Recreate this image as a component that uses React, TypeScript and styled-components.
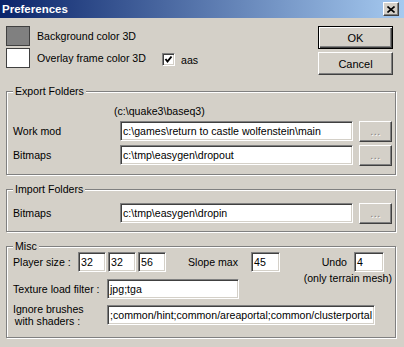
import React from 'react';
import styled, { createGlobalStyle } from 'styled-components';

const GlobalStyle = createGlobalStyle`
  html, body {
    margin: 0;
    padding: 0;
    background: #d4d0c8;
  }
  body {
    font-family: "Liberation Sans", Arial, sans-serif;
    font-size: 10.6px;
    color: #000;
  }
`;

const Window = styled.div`
  width: 404px;
  height: 347px;
  background: #d4d0c8;
  overflow: hidden;
  display: flex;
  flex-direction: column;
`;

const TitleBar = styled.div`
  flex: none;
  height: 18px;
  display: flex;
  align-items: center;
  justify-content: space-between;
  padding: 0 5px 0 2px;
  background: linear-gradient(to right, #0a246a, #a6caf0);
`;

const Title = styled.span`
  color: #fff;
  font-weight: bold;
  font-size: 11.5px;
  line-height: 18px;
`;

const raised = `
  border: 1px solid;
  border-color: #fff #404040 #404040 #fff;
  box-shadow: inset -1px -1px 0 #808080, inset 1px 1px 0 #d4d0c8;
  background: #d4d0c8;
`;

const sunken = `
  border: 1px solid;
  border-color: #808080 #fff #fff #808080;
  box-shadow: inset 1px 1px 0 #404040, inset -1px -1px 0 #d4d0c8;
`;

const CloseButton = styled.div`
  ${raised}
  box-sizing: border-box;
  width: 16px;
  height: 14px;
  display: flex;
  align-items: center;
  justify-content: center;
`;

const Body = styled.div`
  padding: 8px 0 0 6px;
  display: flex;
  flex-direction: column;
`;

const TopSection = styled.div`
  display: flex;
  justify-content: space-between;
  align-items: flex-start;
  padding-right: 11px;
  margin-bottom: 10px;
`;

const SwatchList = styled.div`
  display: flex;
  flex-direction: column;
  gap: 2px;
`;

const SwatchRow = styled.div`
  display: flex;
  align-items: center;
  height: 20px;
`;

const Swatch = styled.div<{ $color: string }>`
  box-sizing: border-box;
  width: 24px;
  height: 20px;
  border: 1px solid #404040;
  background: ${(p) => p.$color};
`;

const SwatchLabel = styled.span`
  margin-left: 7px;
  width: 125px;
  white-space: nowrap;
`;

const CheckWrap = styled.label`
  display: flex;
  align-items: center;
  gap: 6px;
  margin-top: 3px;
`;

const CheckBox = styled.span`
  ${sunken}
  box-sizing: border-box;
  width: 13px;
  height: 13px;
  background: #fff;
  display: flex;
  align-items: center;
  justify-content: center;
`;

const ButtonColumn = styled.div`
  display: flex;
  flex-direction: column;
  gap: 3px;
`;

const DialogButton = styled.div<{ $default?: boolean }>`
  box-sizing: border-box;
  width: 75px;
  height: 23px;
  display: flex;
  align-items: center;
  justify-content: center;
  font-size: 11px;
  ${(p) =>
    p.$default
      ? `
    border: 1px solid #000;
    background: #d4d0c8;
    box-shadow: inset 1px 1px 0 #fff, inset -1px -1px 0 #404040, inset -2px -2px 0 #808080;
  `
      : raised}
`;

const Group = styled.fieldset<{ $pad: string }>`
  box-sizing: border-box;
  width: 390px;
  margin: 0 0 8px 0;
  padding: ${(p) => p.$pad};
  border: 1px solid #808080;
  box-shadow: inset 1px 1px 0 #fff, 1px 1px 0 #fff;
  min-inline-size: 0;
`;

const Legend = styled.legend`
  padding: 0 2px;
  line-height: 13px;
  background: #d4d0c8;
`;

const Hint = styled.div`
  margin-left: 101px;
  line-height: 13px;
`;

const FolderRow = styled.div`
  display: grid;
  grid-template-columns: 101px 233px 33px;
  column-gap: 6px;
  align-items: center;
  height: 22px;
  margin-top: 2px;
`;

const TextBox = styled.div<{ $w?: number }>`
  ${sunken}
  box-sizing: border-box;
  width: ${(p) => (p.$w ? `${p.$w}px` : 'auto')};
  height: 20px;
  padding: 0 1px 0 2px;
  background: #fff;
  line-height: 18px;
  white-space: nowrap;
  overflow: hidden;
`;

const BrowseButton = styled.div`
  ${raised}
  box-sizing: border-box;
  height: 21px;
  display: flex;
  align-items: center;
  justify-content: center;
  color: #808080;
  text-shadow: 1px 1px 0 #fff;
  letter-spacing: 0.5px;
`;

const MiscTop = styled.div`
  display: flex;
  justify-content: space-between;
  align-items: flex-start;
  margin-top: -1px;
`;

const MiscLeft = styled.div`
  display: flex;
  flex-direction: column;
  gap: 7px;
`;

const MiscRow = styled.div`
  display: flex;
  align-items: center;
  height: 20px;
`;

const FieldLabel = styled.span<{ $w: number; $ml?: number }>`
  width: ${(p) => p.$w}px;
  margin-left: ${(p) => p.$ml ?? 0}px;
  white-space: nowrap;
`;

const SizeInputs = styled.div`
  display: flex;
  gap: 2px;
`;

const MiscRight = styled.div`
  display: flex;
  flex-direction: column;
  align-items: flex-end;
`;

const UndoRow = styled.div`
  display: flex;
  align-items: center;
  gap: 7px;
  height: 20px;
  margin-right: 8px;
`;

const Note = styled.div`
  line-height: 13px;
`;

const IgnoreRow = styled.div`
  display: flex;
  align-items: center;
  height: 24px;
  margin-top: 4px;
`;

const IgnoreLabel = styled.div`
  width: 69px;
  margin-right: 25px;
  text-align: center;
  line-height: 12px;
  white-space: nowrap;
`;

export default function App() {
  return (
    <>
      <GlobalStyle />
      <Window>
        <TitleBar>
          <Title>Preferences</Title>
          <CloseButton>
            <svg width="8" height="7" viewBox="0 0 8 7">
              <path d="M0.5 0.5 L7.5 6.5 M7.5 0.5 L0.5 6.5" stroke="#000" strokeWidth="1.6" />
            </svg>
          </CloseButton>
        </TitleBar>
        <Body>
          <TopSection>
            <SwatchList>
              <SwatchRow>
                <Swatch $color="#808080" />
                <SwatchLabel>Background color 3D</SwatchLabel>
              </SwatchRow>
              <SwatchRow>
                <Swatch $color="#ffffff" />
                <SwatchLabel>Overlay frame color 3D</SwatchLabel>
                <CheckWrap>
                  <CheckBox>
                    <svg width="9" height="9" viewBox="0 0 9 9">
                      <path d="M1.5 4 L3.5 6.5 L7.5 1.5" fill="none" stroke="#000" strokeWidth="2" />
                    </svg>
                  </CheckBox>
                  aas
                </CheckWrap>
              </SwatchRow>
            </SwatchList>
            <ButtonColumn>
              <DialogButton $default>OK</DialogButton>
              <DialogButton>Cancel</DialogButton>
            </ButtonColumn>
          </TopSection>

          <Group $pad="7px 6px 8px 6px">
            <Legend>Export Folders</Legend>
            <Hint>(c:\quake3\baseq3)</Hint>
            <FolderRow>
              <span>Work mod</span>
              <TextBox>c:\games\return to castle wolfenstein\main</TextBox>
              <BrowseButton>...</BrowseButton>
            </FolderRow>
            <FolderRow>
              <span>Bitmaps</span>
              <TextBox>c:\tmp\easygen\dropout</TextBox>
              <BrowseButton>...</BrowseButton>
            </FolderRow>
          </Group>

          <Group $pad="4px 6px 7px 6px">
            <Legend>Import Folders</Legend>
            <FolderRow>
              <span>Bitmaps</span>
              <TextBox>c:\tmp\easygen\dropin</TextBox>
              <BrowseButton>...</BrowseButton>
            </FolderRow>
          </Group>

          <Group $pad="0 3px 10px 6px">
            <Legend>Misc</Legend>
            <MiscTop>
              <MiscLeft>
                <MiscRow>
                  <FieldLabel $w={65}>Player size :</FieldLabel>
                  <SizeInputs>
                    <TextBox $w={28}>32</TextBox>
                    <TextBox $w={28}>32</TextBox>
                    <TextBox $w={28}>56</TextBox>
                  </SizeInputs>
                  <FieldLabel $w={63} $ml={22}>Slope max</FieldLabel>
                  <TextBox $w={29}>45</TextBox>
                </MiscRow>
                <MiscRow>
                  <FieldLabel $w={94}>Texture load filter :</FieldLabel>
                  <TextBox $w={132}>jpg;tga</TextBox>
                </MiscRow>
              </MiscLeft>
              <MiscRight>
                <UndoRow>
                  <span>Undo</span>
                  <TextBox $w={30}>4</TextBox>
                </UndoRow>
                <Note>(only terrain mesh)</Note>
              </MiscRight>
            </MiscTop>
            <IgnoreRow>
              <IgnoreLabel>
                Ignore brushes
                <br />
                with shaders :
              </IgnoreLabel>
              <TextBox $w={268}>;common/hint;common/areaportal;common/clusterportal</TextBox>
            </IgnoreRow>
          </Group>
        </Body>
      </Window>
    </>
  );
}
